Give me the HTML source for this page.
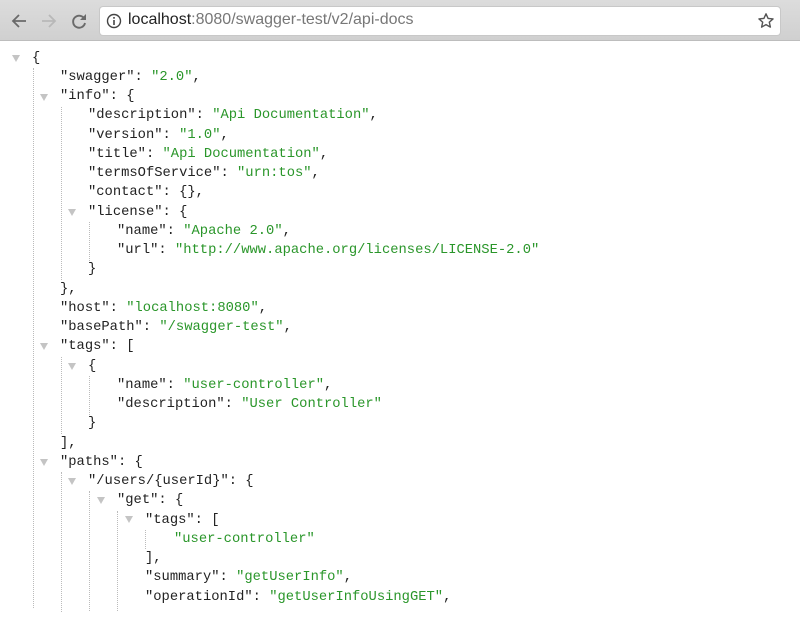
<!DOCTYPE html>
<html><head><meta charset="utf-8"><style>
*{margin:0;padding:0;box-sizing:border-box}
body{width:800px;height:597px;overflow:hidden;background:#fff;position:relative;font-family:"Liberation Mono",monospace}
.tb{position:absolute;left:0;top:0;width:800px;height:41px;background:linear-gradient(#dcdcdc,#d0d0d0);border-bottom:1px solid #bdbdbd}
.addr{position:absolute;left:100px;top:7px;width:680px;height:28px;background:#fff;border-radius:3px;box-shadow:0 0 0 1px #c8c8c8}
.url{position:absolute;left:28px;top:4px;font:16px "Liberation Sans",sans-serif;color:#777;white-space:nowrap}
.url b{font-weight:normal;color:#222}
.w{position:absolute;left:0;top:1px;width:800px;height:620px}
.l{position:absolute;height:19.25px;line-height:19.25px;font-size:13.8px;color:#222;white-space:pre}
.s{color:#2a962a}
.t{position:absolute;width:0;height:0;border-left:4px solid transparent;border-right:4px solid transparent;border-top:7px solid #c4c4c4}
.g{position:absolute;width:0;border-left:1px dotted #bbb}
</style></head><body>
<div class="tb">
<svg style="position:absolute;left:10px;top:12px" width="18" height="18" viewBox="0 0 18 18"><path d="M16 9H3M9 3L3 9l6 6" stroke="#6a6a6a" stroke-width="1.8" fill="none"/></svg>
<svg style="position:absolute;left:40px;top:12px" width="18" height="18" viewBox="0 0 18 18"><path d="M2 9h13M9 3l6 6-6 6" stroke="#b8b8b8" stroke-width="1.8" fill="none"/></svg>
<svg style="position:absolute;left:70px;top:12px" width="18" height="18" viewBox="0 0 18 18"><path d="M14.5 7A6 6 0 1 0 15 11" stroke="#6a6a6a" stroke-width="1.9" fill="none"/><path d="M16 2v6h-6z" fill="#6a6a6a"/></svg>
<div class="addr">
<svg style="position:absolute;left:6px;top:6px" width="16" height="16" viewBox="0 0 16 16"><circle cx="8" cy="8" r="6.5" stroke="#444" stroke-width="1.4" fill="none"/><rect x="7.2" y="7" width="1.6" height="5" fill="#444"/><rect x="7.2" y="4" width="1.6" height="1.7" fill="#444"/></svg>
<div class="url"><b>localhost</b>:8080/swagger-test/v2/api-docs</div>
<svg style="position:absolute;left:657px;top:5px" width="18" height="18" viewBox="0 0 18 18"><path d="M9 1.8l2.1 4.6 5 .5-3.8 3.3 1.1 4.9L9 12.6l-4.4 2.5 1.1-4.9L1.9 6.9l5-.5z" stroke="#555" stroke-width="1.4" fill="none" stroke-linejoin="round"/></svg>
</div>
</div>
<div class="w">
<div class="g" style="left:33px;top:67px;height:540px"></div>
<div class="g" style="left:61px;top:106px;height:173px"></div>
<div class="g" style="left:89px;top:221px;height:39px"></div>
<div class="g" style="left:61px;top:356px;height:77px"></div>
<div class="g" style="left:89px;top:375px;height:39px"></div>
<div class="g" style="left:61px;top:471px;height:140px"></div>
<div class="g" style="left:89px;top:490px;height:120px"></div>
<div class="g" style="left:117px;top:510px;height:100px"></div>
<div class="g" style="left:145px;top:529px;height:19px"></div>

<div class="t" style="left:12px;top:54px"></div>
<div class="t" style="left:40px;top:93px"></div>
<div class="t" style="left:68px;top:208px"></div>
<div class="t" style="left:40px;top:342px"></div>
<div class="t" style="left:68px;top:362px"></div>
<div class="t" style="left:40px;top:458px"></div>
<div class="t" style="left:68px;top:477px"></div>
<div class="t" style="left:97px;top:496px"></div>
<div class="t" style="left:125px;top:515px"></div>

<div class="l" style="left:32px;top:47.5px">{</div>
<div class="l" style="left:60px;top:66.75px">"swagger": <span class="s">"2.0"</span>,</div>
<div class="l" style="left:60px;top:86px">"info": {</div>
<div class="l" style="left:88px;top:105.25px">"description": <span class="s">"Api Documentation"</span>,</div>
<div class="l" style="left:88px;top:124.5px">"version": <span class="s">"1.0"</span>,</div>
<div class="l" style="left:88px;top:143.75px">"title": <span class="s">"Api Documentation"</span>,</div>
<div class="l" style="left:88px;top:163px">"termsOfService": <span class="s">"urn:tos"</span>,</div>
<div class="l" style="left:88px;top:182.25px">"contact": {},</div>
<div class="l" style="left:88px;top:201.5px">"license": {</div>
<div class="l" style="left:117px;top:220.75px">"name": <span class="s">"Apache 2.0"</span>,</div>
<div class="l" style="left:117px;top:240px">"url": <span class="s">"http://www.apache.org/licenses/LICENSE-2.0"</span></div>
<div class="l" style="left:88px;top:259.25px">}</div>
<div class="l" style="left:60px;top:278.5px">},</div>
<div class="l" style="left:60px;top:297.75px">"host": <span class="s">"localhost:8080"</span>,</div>
<div class="l" style="left:60px;top:317px">"basePath": <span class="s">"/swagger-test"</span>,</div>
<div class="l" style="left:60px;top:336.25px">"tags": [</div>
<div class="l" style="left:88px;top:355.5px">{</div>
<div class="l" style="left:117px;top:374.75px">"name": <span class="s">"user-controller"</span>,</div>
<div class="l" style="left:117px;top:394px">"description": <span class="s">"User Controller"</span></div>
<div class="l" style="left:88px;top:413.25px">}</div>
<div class="l" style="left:60px;top:432.5px">],</div>
<div class="l" style="left:60px;top:451.75px">"paths": {</div>
<div class="l" style="left:88px;top:471px">"/users/{userId}": {</div>
<div class="l" style="left:117px;top:490.25px">"get": {</div>
<div class="l" style="left:145px;top:509.5px">"tags": [</div>
<div class="l" style="left:174px;top:528.75px"><span class="s">"user-controller"</span></div>
<div class="l" style="left:145px;top:548px">],</div>
<div class="l" style="left:145px;top:567.25px">"summary": <span class="s">"getUserInfo"</span>,</div>
<div class="l" style="left:145px;top:586.5px">"operationId": <span class="s">"getUserInfoUsingGET"</span>,</div>
</div>
</body></html>
